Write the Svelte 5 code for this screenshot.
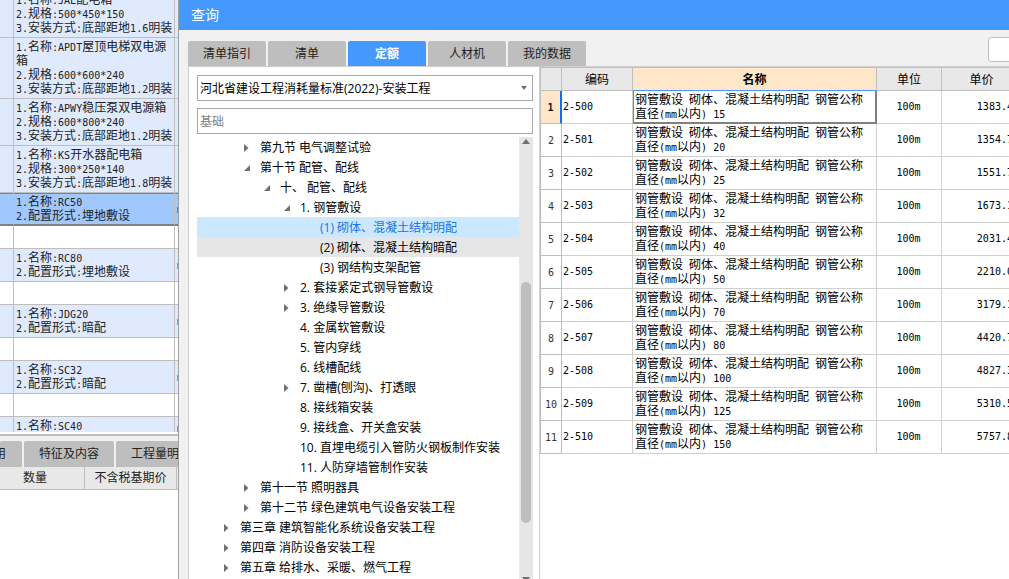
<script>
  const items = [
    { lines: ['1.名称:JAL配电箱', '2.规格:500*450*150', '3.安装方式:底部距地1.6明装'], unit: '台' },
    { lines: ['1.名称:APDT屋顶电梯双电源', '箱', '2.规格:600*600*240', '3.安装方式:底部距地1.2明装'], unit: '台' },
    { lines: ['1.名称:APWY稳压泵双电源箱', '2.规格:600*800*240', '3.安装方式:底部距地1.2明装'], unit: '台' },
    { lines: ['1.名称:KS开水器配电箱', '2.规格:300*250*140', '3.安装方式:底部距地1.8明装'], unit: '台' },
    { lines: ['1.名称:RC50', '2.配置形式:埋地敷设'], unit: 'm', selected: true },
    { lines: [] },
    { lines: ['1.名称:RC80', '2.配置形式:埋地敷设'], unit: 'm' },
    { lines: [] },
    { lines: ['1.名称:JDG20', '2.配置形式:暗配'], unit: 'm' },
    { lines: [] },
    { lines: ['1.名称:SC32', '2.配置形式:暗配'], unit: 'm' },
    { lines: [] },
    { lines: ['1.名称:SC40'], unit: 'm' }
  ];

  const tabs = ['清单指引', '清单', '定额', '人材机', '我的数据'];
  let activeTab = $state('定额');

  const tree = [
    { level: 1, arrow: 'closed', text: '第九节 电气调整试验' },
    { level: 1, arrow: 'open', text: '第十节 配管、配线' },
    { level: 2, arrow: 'open', text: '十、 配管、配线' },
    { level: 3, arrow: 'open', text: '1. 钢管敷设' },
    { level: 4, text: '(1) 砌体、混凝土结构明配' },
    { level: 4, text: '(2) 砌体、混凝土结构暗配', hover: true },
    { level: 4, text: '(3) 钢结构支架配管' },
    { level: 3, arrow: 'closed', text: '2. 套接紧定式钢导管敷设' },
    { level: 3, arrow: 'closed', text: '3. 绝缘导管敷设' },
    { level: 3, text: '4. 金属软管敷设' },
    { level: 3, text: '5. 管内穿线' },
    { level: 3, text: '6. 线槽配线' },
    { level: 3, arrow: 'closed', text: '7. 凿槽(刨沟)、打透眼' },
    { level: 3, text: '8. 接线箱安装' },
    { level: 3, text: '9. 接线盒、开关盒安装' },
    { level: 3, text: '10. 直埋电缆引入管防火钢板制作安装' },
    { level: 3, text: '11. 人防穿墙管制作安装' },
    { level: 1, arrow: 'closed', text: '第十一节 照明器具' },
    { level: 1, arrow: 'closed', text: '第十二节 绿色建筑电气设备安装工程' },
    { level: 0, arrow: 'closed', text: '第三章 建筑智能化系统设备安装工程' },
    { level: 0, arrow: 'closed', text: '第四章 消防设备安装工程' },
    { level: 0, arrow: 'closed', text: '第五章 给排水、采暖、燃气工程' }
  ];
  let selectedNode = $state(4);

  const quotas = [
    ['2-500', 15, '1383.43'],
    ['2-501', 20, '1354.71'],
    ['2-502', 25, '1551.75'],
    ['2-503', 32, '1673.15'],
    ['2-504', 40, '2031.45'],
    ['2-505', 50, '2210.05'],
    ['2-506', 70, '3179.15'],
    ['2-507', 80, '4420.75'],
    ['2-508', 100, '4827.35'],
    ['2-509', 125, '5310.55'],
    ['2-510', 150, '5757.85']
  ];
  let current = $state(0);

  // Splits a string so that Latin runs can take the half-width face.
  const runs = (s) => s.match(/[\x20-\x7e]+|[^\x20-\x7e]+/g) ?? [];
  const isLatin = (s) => s.charCodeAt(0) < 127;
</script>

{#snippet mixed(text)}{#each runs(text) as r}{#if isLatin(r)}<span class="half">{r}</span>{:else}{r}{/if}{/each}{/snippet}

<div class="screen">
  <section class="back">
    <div class="bill">
      <table>
        <colgroup><col class="c-lead" /><col class="c-feature" /><col class="c-unit" /></colgroup>
        <tbody>
          {#each items as item}
            <tr class:filled={item.lines.length} class:selected={item.selected}>
              <td></td>
              <td>{#each item.lines as line}<div>{@render mixed(line)}</div>{/each}</td>
              <td class="unit">{@render mixed(item.unit ?? '')}</td>
            </tr>
          {/each}
        </tbody>
      </table>
    </div>
    <div class="lower-tabs">
      <button class="cut">用</button>
      <button>特征及内容</button>
      <button>工程量明细</button>
    </div>
    <table class="lower-head">
      <colgroup><col class="c-qty" /><col class="c-base" /><col class="c-rest" /></colgroup>
      <thead><tr><th class="qty">数量</th><th>不含税基期价</th><th></th></tr></thead>
    </table>
  </section>

  <main class="dialog">
    <header>查询</header>
    <div class="toolbar">
      <nav>
        {#each tabs as t}
          <button class:active={activeTab === t} onclick={() => (activeTab = t)}>{t}</button>
        {/each}
      </nav>
      <input class="search" aria-label="搜索" />
    </div>
    <div class="body">
      <aside>
        <div class="combo">
          <select aria-label="定额库">
            <option>河北省建设工程消耗量标准(2022)-安装工程</option>
          </select>
          <svg width="6" height="4" viewBox="0 0 6 4"><path d="M0 0h6L3 4z" fill="#707070" /></svg>
        </div>
        <input class="filter" aria-label="筛选" placeholder="基础" />
        <div class="tree-area">
          <ul>
            {#each tree as node, i}
              <li>
                <button
                  class="node l{node.level}"
                  class:chosen={selectedNode === i}
                  class:hover={node.hover}
                  onclick={() => (selectedNode = i)}
                >
                  <span class="arrow">
                    {#if node.arrow === 'closed'}
                      <svg width="12" height="10" viewBox="0 0 12 10"><path d="M4 1l4.500 4-4.500 4z" fill="#707070" /></svg>
                    {:else if node.arrow === 'open'}
                      <svg width="12" height="10" viewBox="0 0 12 10"><path d="M10 2v6H4z" fill="#707070" /></svg>
                    {/if}
                  </span>{node.text}
                </button>
              </li>
            {/each}
          </ul>
          <div class="scroll">
            <svg width="8" height="5" viewBox="0 0 8 5"><path d="M0 5h8L4 0z" fill="#707070" /></svg>
            <div class="track"><div class="thumb"></div></div>
            <svg width="8" height="5" viewBox="0 0 8 5"><path d="M0 0h8L4 5z" fill="#707070" /></svg>
          </div>
        </div>
      </aside>

      <div class="result">
        <table>
          <colgroup>
            <col class="c-no" /><col class="c-code" /><col class="c-name" /><col class="c-u" /><col class="c-price" />
          </colgroup>
          <thead>
            <tr><th></th><th>编码</th><th class="name-head">名称</th><th>单位</th><th>单价</th></tr>
          </thead>
          <tbody>
            {#each quotas as [code, size, price], i}
              <tr class:current={current === i} onclick={() => (current = i)}>
                <th class="no" scope="row">{@render mixed(String(i + 1))}</th>
                <td>{@render mixed(code)}</td>
                <td class="name">{@render mixed('钢管敷设 砌体、混凝土结构明配 钢管公称')}<br />{@render mixed('直径(mm以内) ' + size)}</td>
                <td class="center">{@render mixed('100m')}</td>
                <td class="price">{@render mixed(price)}</td>
              </tr>
            {/each}
          </tbody>
        </table>
      </div>
    </div>
  </main>
</div>

<style>
  :global(body) {
    overflow: hidden;
  }
  * {
    box-sizing: border-box;
  }
  .screen {
    display: flex;
    height: 100vh;
    overflow: hidden;
    background: #fff;
    color: #222;
    font: 12px/14px 'Open Sans', 'Noto Sans CJK SC', sans-serif;
  }
  button,
  input,
  select {
    margin: 0;
    padding: 0;
    border: 0;
    border-radius: 0;
    outline: 0;
    background: none;
    color: inherit;
    font: inherit;
  }
  table {
    table-layout: fixed;
    border-collapse: separate;
    border-spacing: 0;
    font-family: 'Noto Sans CJK SC', sans-serif;
  }
  th,
  td {
    padding: 0;
    font-weight: 400;
    overflow: hidden;
    white-space: nowrap;
  }
  .half {
    font-family: 'DejaVu Sans Mono', monospace;
    font-size: 10px;
    line-height: 10px;
    white-space: pre;
  }

  .back {
    flex: none;
    display: flex;
    flex-direction: column;
    width: 179px;
    overflow: hidden;
    border-right: 1px solid #a0a0a0;
  }
  .bill {
    flex: none;
    height: 432px;
    overflow: hidden;
  }
  .bill table {
    width: 200px;
    margin-top: -9px;
  }
  .c-lead { width: 14px; }
  .c-feature { width: 161px; }
  .c-unit { width: 25px; }
  .bill td {
    height: 23px;
    padding: 1px 2px 3px;
    border: solid #bebebe;
    border-width: 0 1px 1px 0;
    vertical-align: top;
  }
  .bill .filled td {
    background: #dfeaff;
  }
  .bill .selected td {
    background: #a0c8ff;
    border-bottom: 2px solid #808080;
    padding-bottom: 2px;
    box-shadow: inset 0 1px #808080;
  }
  .bill td.unit {
    vertical-align: middle;
  }
  .lower-tabs {
    flex: none;
    display: flex;
    gap: 2px;
    height: 33px;
    margin-top: 2px;
    padding-top: 5px;
    border-top: 2px solid #bebebe;
    background: #f1f1f1;
  }
  .lower-tabs button {
    flex: none;
    width: 90px;
    height: 26px;
    border-radius: 2px 2px 0 0;
    background: #bebebe;
  }
  .lower-tabs .cut {
    width: 22px;
    padding-right: 16px;
    direction: rtl;
  }
  .lower-head {
    flex: none;
    width: 200px;
  }
  .c-qty { width: 85px; }
  .c-base { width: 92px; }
  .c-rest { width: 23px; }
  .lower-head th {
    height: 23px;
    padding-bottom: 2px;
    border: solid #bebebe;
    border-width: 0 1px 1px 0;
    background: #e8e8e8;
  }
  .lower-head .qty {
    padding-right: 14px;
  }

  .dialog {
    flex: 1;
    min-width: 0;
    display: flex;
    flex-direction: column;
    padding-left: 9px;
    background: #f1f1f1;
  }
  header {
    flex: none;
    margin-left: -9px;
    padding: 0 12px;
    background: #4499ff;
    color: #fff;
    font-size: 14px;
    line-height: 30px;
  }
  .toolbar {
    flex: none;
    display: flex;
    justify-content: space-between;
    height: 36px;
    overflow: hidden;
  }
  nav {
    display: flex;
    gap: 2px;
    padding-top: 11px;
  }
  nav button {
    width: 78px;
    height: 25px;
    border-radius: 2px 2px 0 0;
    background: #bebebe;
  }
  nav .active {
    background: #4499ff;
    color: #fff;
    font-weight: 700;
  }
  .search {
    flex: none;
    width: 180px;
    height: 25px;
    margin: 7px -159px 0 0;
    border: 1px solid #bebebe;
    border-radius: 3px;
    background: #fff;
  }
  .body {
    flex: 1;
    min-height: 0;
    display: flex;
    background: #fff;
    border: solid #d0d0d0;
    border-width: 1px 0 0 1px;
    color: #000;
  }
  aside {
    flex: none;
    display: flex;
    flex-direction: column;
    width: 351px;
    padding: 8px 6px 0 8px;
    border-right: 1px solid #d0d0d0;
  }
  .combo {
    flex: none;
    display: flex;
    align-items: center;
    height: 26px;
    padding-right: 5px;
    border: 1px solid #a8a8a8;
  }
  select {
    flex: 1;
    min-width: 0;
    height: 24px;
    padding: 1px 0 0 2px;
    appearance: none;
  }
  .filter {
    flex: none;
    height: 26px;
    margin: 7px 0 3px;
    padding: 1px 2px 0;
    border: 1px solid #a8a8a8;
  }
  .filter::placeholder {
    color: #808080;
    opacity: 1;
  }
  .tree-area {
    flex: 1;
    min-height: 0;
    display: flex;
    overflow: hidden;
  }
  ul {
    flex: 1;
    min-width: 0;
    margin: 0;
    padding: 0;
    list-style: none;
  }
  .node {
    display: flex;
    align-items: center;
    width: 100%;
    height: 20px;
    padding-top: 2px;
    white-space: pre;
  }
  .l0 { padding-left: 23px; }
  .l1 { padding-left: 43px; }
  .l2 { padding-left: 63px; }
  .l3 { padding-left: 83px; }
  .l4 { padding-left: 103px; }
  .chosen {
    background: #cce8ff;
    color: #1a73e8;
  }
  .hover {
    background: #e6e6e6;
  }
  .arrow {
    display: flex;
    width: 20px;
  }
  .scroll {
    flex: none;
    display: flex;
    flex-direction: column;
    align-items: center;
    width: 14px;
    height: 450px;
    padding: 2px 0 5px;
    background: #e6e6e6;
  }
  .scroll svg {
    flex: none;
  }
  .track {
    flex: 1;
    width: 10px;
    padding-top: 138px;
  }
  .thumb {
    height: 241px;
    border-radius: 5px;
    background: #bebebe;
  }

  .result {
    flex: 1;
    min-width: 0;
    overflow: hidden;
  }
  .result table {
    width: 482px;
    border: solid #bebebe;
    border-width: 1px 0 0 1px;
  }
  .c-no { width: 21px; }
  .c-code { width: 71px; }
  .c-name { width: 244px; }
  .c-u { width: 65px; }
  .c-price { width: 80px; }
  .result th,
  .result td {
    border: solid #d0d0d0;
    border-width: 0 1px 1px 0;
  }
  .result thead th {
    height: 23px;
    border-color: #bebebe;
    background: #e8e8e8;
  }
  .result thead .name-head {
    border-bottom-color: #4499ff;
    background: #ffe6c8;
    font-weight: 700;
  }
  .result tbody th {
    padding-bottom: 2px;
    border-color: #bebebe;
    color: #333;
  }
  .result tbody td {
    height: 33px;
    padding: 0 2px 4px 1px;
  }
  .result tbody td.name {
    padding: 1px 2px 0;
    vertical-align: top;
  }
  .result td.center {
    text-align: center;
  }
  .result td.price {
    text-align: right;
  }
  .result .current th {
    border-right: 2px solid #0f6cff;
    background: #ffe6c8;
    color: #111;
    font-weight: 700;
  }
  .result .current td.name {
    border-right: 2px solid #808080;
    border-bottom: 2px solid #808080;
    box-shadow: inset 1px 0 #808080;
  }
</style>
